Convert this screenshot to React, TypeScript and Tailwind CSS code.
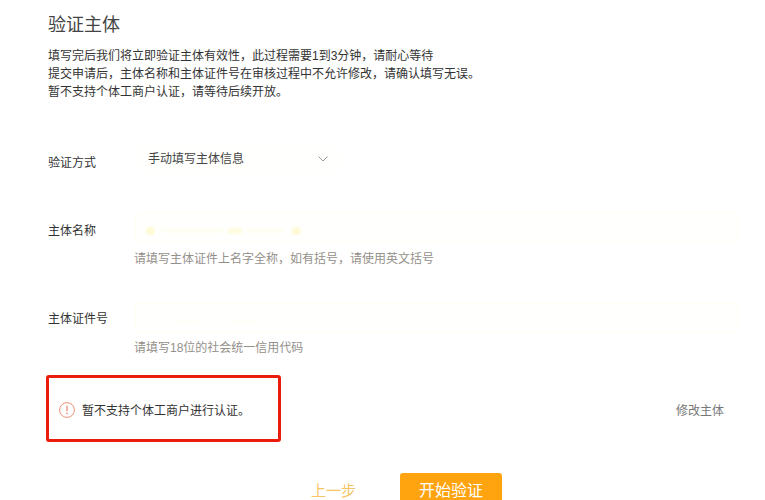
const font = '[font-family:"Liberation_Sans","Noto_Sans_CJK_SC",sans-serif]';

function Field({ label, hint, labelPt, hintMt, children }: { label: string; hint: string; labelPt: string; hintMt: string; children?: React.ReactNode }) {
  return (
    <div className="flex">
      <div className={`w-[87px] text-xs leading-[18px] text-[#333] ${labelPt}`}>{label}</div>
      <div className="w-[603px]">
        <div className="flex h-[30px] items-center gap-[3px] rounded-sm border border-[#fffef3] bg-[#fffffd] pl-[10px] pt-[7px]">
          {children}
        </div>
        <p className={`-ml-[1px] text-xs leading-[18px] text-[#94908a] ${hintMt}`}>{hint}</p>
      </div>
    </div>
  );
}

export default function App() {
  return (
    <div className={`${font} relative h-[500px] w-[765px] overflow-hidden bg-white pl-[48px] text-[#333]`}>
      <h1 className="pt-[13px] text-lg leading-[24px] text-[#444]">验证主体</h1>

      <div className="mt-[10px] text-xs leading-[18px] text-[#333]">
        <p>填写完后我们将立即验证主体有效性，此过程需要1到3分钟，请耐心等待</p>
        <p>提交申请后，主体名称和主体证件号在审核过程中不允许修改，请确认填写无误。</p>
        <p>暂不支持个体工商户认证，请等待后续开放。</p>
      </div>

      <div className="mt-[43px] flex">
        <div className="w-[87px] pt-[10px] text-xs leading-[18px]">验证方式</div>
        <div className="flex h-[28px] w-[205px] items-center justify-between rounded-sm bg-[#fffffd] pl-[13px] pr-[12px] pt-[2px]">
          <span className="text-xs text-[#444]">手动填写主体信息</span>
          <svg width="10" height="6" viewBox="0 0 10 6" fill="none">
            <path d="M0.5 0.5 L5 5 L9.5 0.5" stroke="#999" strokeWidth="1" />
          </svg>
        </div>
      </div>

      <div className="mt-[40px]">
        <Field label="主体名称" hint="请填写主体证件上名字全称，如有括号，请使用英文括号" labelPt="pt-[10px]" hintMt="mt-[8px]">
          <span className="h-[8px] w-[9px] rounded-full bg-[#fefad6] blur-[1px]" />
          <span className="ml-[3px] h-[3px] w-[64px] rounded-full bg-[#fffef0] blur-[1px]" />
          <span className="h-[6px] w-[14px] rounded-full bg-[#fefcdf] blur-[1px]" />
          <span className="h-[3px] w-[40px] rounded-full bg-[#fffef0] blur-[1px]" />
          <span className="ml-[4px] h-[8px] w-[9px] rounded-full bg-[#fefad6] blur-[1px]" />
        </Field>
      </div>

      <div className="mt-[35px]">
        <Field label="主体证件号" hint="请填写18位的社会统一信用代码" labelPt="pt-[7px]" hintMt="mt-[6px]">
          <span className="ml-[30px] h-[2px] w-[20px] bg-[#fffef4] blur-[1px]" />
          <span className="ml-[30px] h-[2px] w-[30px] bg-[#fffef4] blur-[1px]" />
        </Field>
      </div>

      <div className="mt-[45px] flex w-[676px] items-center justify-between pl-[11px]">
        <div className="flex items-center gap-[7px]">
          <svg width="16" height="16" viewBox="0 0 16 16" fill="none" className="-mt-[2px]">
            <circle cx="8" cy="8" r="7.4" stroke="#ee9278" strokeWidth="1" />
            <path d="M8 3.8 V9.2" stroke="#ee8a70" strokeWidth="1.3" />
            <circle cx="8" cy="11.4" r="0.8" fill="#ee8a70" />
          </svg>
          <span className="text-xs leading-[18px] text-[#333]">暂不支持个体工商户进行认证。</span>
        </div>
        <span className="text-xs leading-[18px] text-[#777]">修改主体</span>
      </div>

      <div className="mt-[53px] flex items-start pl-[263px]">
        <span className="mt-[6px] w-[89px] shrink-0 text-[15px] leading-[24px] text-[#f7c566]">上一步</span>
        <button className="flex h-[40px] w-[102px] shrink-0 justify-center rounded-[3px] bg-[#ffa30f] pt-[6px] text-base leading-[24px] text-white">开始验证</button>
      </div>

      {/* annotation drawn over the screenshot */}
      <div className="absolute left-[46px] top-[375px] h-[67px] w-[235px] rounded-[3px] border-[3px] border-[#ec1c0c]" />
    </div>
  );
}
